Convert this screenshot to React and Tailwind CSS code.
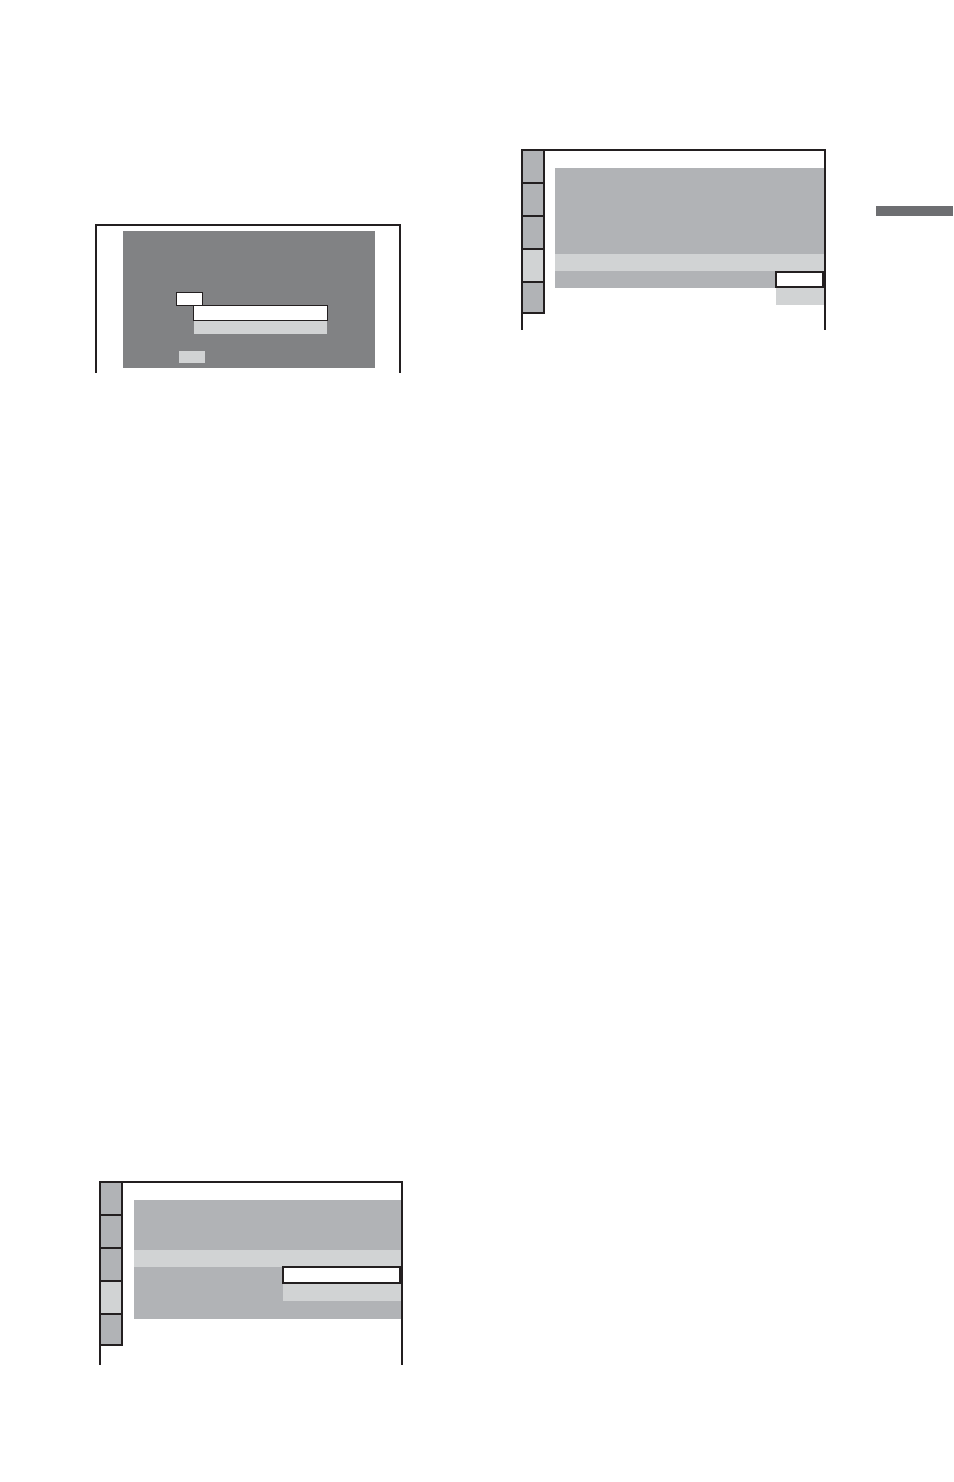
import React from 'react';

// Menu tab column used by the setup screens
const SideTabs = ({ active = 3 }) => (
  <div className="flex flex-col w-[22px] border-r-2 border-[#231f20] self-start">
    {[0, 1, 2, 3, 4].map((i) => (
      <div
        key={i}
        className={`${i === 4 ? 'h-[31px]' : 'h-[33px]'} border-b-2 border-[#231f20] ${
          i === active ? 'bg-[#d1d3d4]' : 'bg-[#b1b3b6]'
        }`}
      ></div>
    ))}
  </div>
);

// Screen with the pop-up list on a dark background
const PopupScreen = () => (
  <div className="ml-[95px] mt-[224px] w-[306px] h-[149px] border-t-2 border-x-2 border-[#231f20] pl-[26px] pt-[5px]">
    <div className="w-[252px] h-[137px] bg-[#818284] flex flex-col items-start pt-[61px]">
      <div className="ml-[53px] w-[27px] h-[14px] bg-white border border-[#231f20]"></div>
      <div className="ml-[70px] -mt-[1px] w-[135px] h-[16px] bg-white border border-[#231f20]"></div>
      <div className="ml-[71px] w-[133px] h-[13px] bg-[#d1d3d4]"></div>
      <div className="ml-[56px] mt-[17px] w-[26px] h-[12px] bg-[#d1d3d4]"></div>
    </div>
  </div>
);

// Setup screen with the option list at the right edge
const SetupScreenNarrow = () => (
  <div className="ml-[120px] mt-[149px] w-[305px] h-[181px] border-t-2 border-x-2 border-[#231f20] flex">
    <SideTabs />
    <div className="flex-1 flex flex-col pl-[10px] pt-[17px]">
      <div className="h-[86px] bg-[#b1b3b6]"></div>
      <div className="h-[17px] bg-[#d1d3d4]"></div>
      <div className="h-[17px] flex">
        <div className="flex-1 bg-[#b1b3b6]"></div>
        <div className="w-[49px] bg-white border-2 border-[#231f20]"></div>
      </div>
      <div className="h-[17px] w-[48px] self-end bg-[#d1d3d4]"></div>
    </div>
  </div>
);

// Setup screen with the wider option list
const SetupScreenWide = () => (
  <div className="ml-[99px] mt-[808px] w-[304px] h-[184px] border-t-2 border-x-2 border-[#231f20] flex">
    <SideTabs />
    <div className="flex-1 flex flex-col pl-[11px] pt-[17px]">
      <div className="h-[50px] bg-[#b1b3b6]"></div>
      <div className="h-[17px] bg-[#d1d3d4]"></div>
      <div className="h-[52px] bg-[#b1b3b6] flex flex-col items-end">
        <div className="-mt-[1px] w-[119px] h-[18px] bg-white border-2 border-[#231f20]"></div>
        <div className="w-[118px] h-[17px] bg-[#d1d3d4]"></div>
      </div>
    </div>
  </div>
);

const App = () => {
  return (
    <div className="w-[954px] h-[1482px] bg-white flex flex-col overflow-hidden">
      {/* Top row: first screen, second screen and the chapter tab */}
      <div className="flex items-start">
        <PopupScreen />
        <SetupScreenNarrow />
        <div className="ml-[50px] mt-[206px] w-[77px] h-[10px] bg-[#6d6e71]"></div>
      </div>

      {/* Bottom screen */}
      <SetupScreenWide />
    </div>
  );
};

export default App;
